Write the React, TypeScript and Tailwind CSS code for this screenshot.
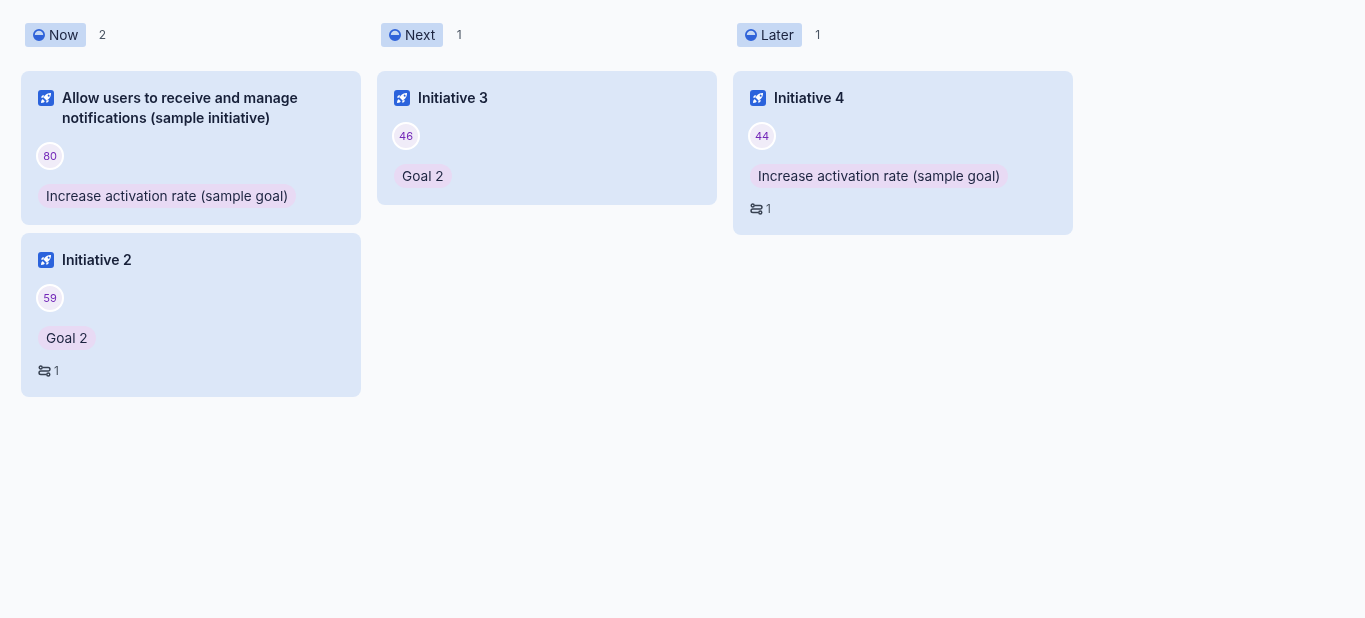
const data = [
  { name: "Now", count: 2, cards: [
    { title: "Allow users to receive and manage notifications (sample initiative)", score: 80, goal: "Increase activation rate (sample goal)", links: false },
    { title: "Initiative 2", score: 59, goal: "Goal 2", links: true },
  ]},
  { name: "Next", count: 1, cards: [
    { title: "Initiative 3", score: 46, goal: "Goal 2", links: false },
  ]},
  { name: "Later", count: 1, cards: [
    { title: "Initiative 4", score: 44, goal: "Increase activation rate (sample goal)", links: true },
  ]},
];

function StatusIcon() {
  return (
    <svg width="12" height="12" viewBox="0 0 12 12" className="shrink-0">
      <circle cx="6" cy="6" r="5.1" fill="none" stroke="#2f62d9" strokeWidth="1.8" />
      <path d="M1.500 6h9v.4a4.500 4.500 0 0 1-9 0z" fill="#2f62d9" />
    </svg>
  );
}

function RocketIcon() {
  return (
    <span className="flex h-4 w-4 shrink-0 items-center justify-center rounded-[3px] bg-[#2b63dc]">
      <svg width="12" height="12" viewBox="0 0 12 12" fill="#fff">
        <path d="M11 1c-2.900-.1-5 .9-6.500 3L3.500 5.400l3.100 3.100 1.400-1C10.100 6 11.100 3.900 11 1zM7.800 3.200a1 1 0 1 1 1 1.500 1 1 0 0 1-1-1.500z" fillRule="evenodd" />
        <path d="M4.300 3.300 2.200 3.600.9 5.500l2.300.3zM8.700 7.700l-.3 2.100-1.900 1.300-.3-2.300zM2.800 7.300c-1 .3-1.600 1.200-1.800 3.700 2.500-.2 3.400-.8 3.700-1.800z" />
      </svg>
    </span>
  );
}

function LinkIcon() {
  return (
    <svg width="13" height="12" viewBox="0 0 13 12" fill="none" stroke="#374151" className="shrink-0">
      <path d="M4.500 2.500h5.700a1.750 1.750 0 0 1 0 3.500H2.800a1.750 1.750 0 0 0 0 3.500h5.700" strokeWidth="1.500" />
      <circle cx="2.700" cy="2.500" r="1.500" strokeWidth="1.400" />
      <circle cx="10.300" cy="9.500" r="1.500" strokeWidth="1.400" />
    </svg>
  );
}

function Card({ card }: { card: (typeof data)[number]["cards"][number] }) {
  return (
    <div className="w-[340px] rounded-lg bg-[#dce7f8] p-[17px]">
      <div className="flex items-start gap-2">
        <div className="mt-0.5"><RocketIcon /></div>
        <div className="pr-8 text-sm leading-5 font-semibold text-[#172039]">{card.title}</div>
      </div>
      <div className="mt-[14px] -ml-[2px] flex h-7 w-7 items-center justify-center rounded-full border-2 border-white bg-[#f0ecf8] text-[11px] text-[#7328b8]">
        {card.score}
      </div>
      <div className="mt-[14px] flex">
        <span className="h-6 rounded-full bg-[#e8daf4] px-2 text-[13.65px] leading-6 text-[#1c2440]">{card.goal}</span>
      </div>
      {card.links && (
        <div className="mt-[14px] mb-[2px] flex h-[14px] items-center gap-[3px] text-xs text-[#4b5563]">
          <LinkIcon />
          <span>1</span>
        </div>
      )}
    </div>
  );
}

export default function App() {
  return (
    <div className="min-h-[618px] bg-[#f9fafc] pt-[23px] pl-[21px] font-['Inter',sans-serif]">
      <div className="flex items-start gap-4">
        {data.map((col) => (
          <div key={col.name} className="flex w-[340px] flex-col [will-change:transform]">
            <div className="flex h-6 items-center pl-1">
              <span className="flex h-6 items-center gap-1 rounded-[3px] bg-[#c6d8f4] px-2 text-[13.65px] text-[#1c2440]">
                <StatusIcon />
                {col.name}
              </span>
              <span className="ml-3 w-2 text-center text-xs text-[#4b5563]">{col.count}</span>
            </div>
            <div className="mt-6 flex flex-col gap-2">
              {col.cards.map((c) => <Card key={c.title} card={c} />)}
            </div>
          </div>
        ))}
      </div>
    </div>
  );
}
